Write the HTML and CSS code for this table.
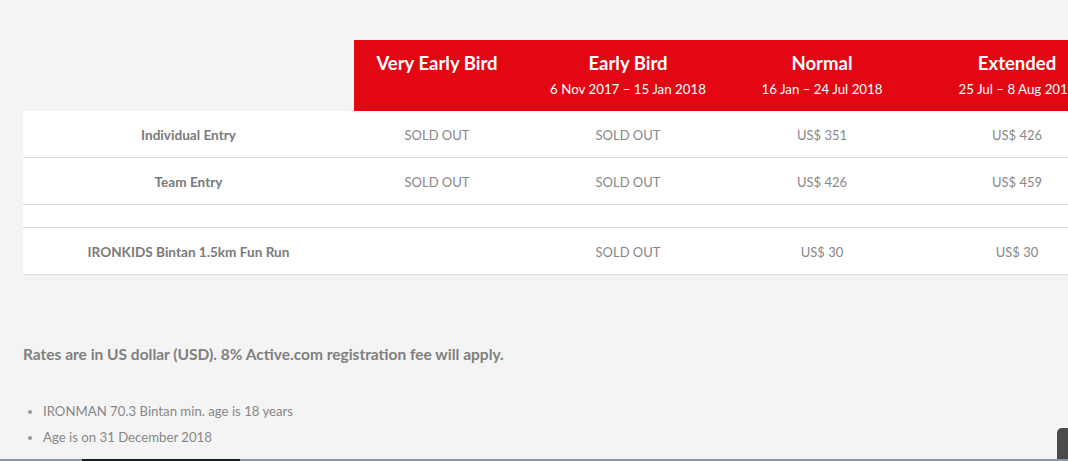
FILE: index.html
```html
<!DOCTYPE html>
<html>
<head>
<meta charset="utf-8">
<link rel="stylesheet" href="styles.css">
</head>
<body>
<div class="page">
  <table class="rates">
    <colgroup>
      <col class="c-label"><col class="c1"><col class="c2"><col class="c3"><col class="c4">
    </colgroup>
    <thead>
      <tr>
        <th class="blank"></th>
        <th><div class="title">Very Early Bird</div><div class="date">&nbsp;</div></th>
        <th><div class="title">Early Bird</div><div class="date">6 Nov 2017 – 15 Jan 2018</div></th>
        <th><div class="title">Normal</div><div class="date">16 Jan – 24 Jul 2018</div></th>
        <th><div class="title">Extended</div><div class="date">25 Jul – 8 Aug 2018</div></th>
      </tr>
    </thead>
    <tbody>
      <tr>
        <td class="label">Individual Entry</td>
        <td>SOLD OUT</td><td>SOLD OUT</td><td>US$ 351</td><td>US$ 426</td>
      </tr>
      <tr>
        <td class="label">Team Entry</td>
        <td>SOLD OUT</td><td>SOLD OUT</td><td>US$ 426</td><td>US$ 459</td>
      </tr>
      <tr class="spacer">
        <td></td><td></td><td></td><td></td><td></td>
      </tr>
      <tr>
        <td class="label">IRONKIDS Bintan 1.5km Fun Run</td>
        <td></td><td>SOLD OUT</td><td>US$ 30</td><td>US$ 30</td>
      </tr>
    </tbody>
  </table>

  <p class="note">Rates are in US dollar (USD). 8% Active.com registration fee will apply.</p>

  <ul class="bullets">
    <li>IRONMAN 70.3 Bintan min. age is 18 years</li>
    <li>Age is on 31 December 2018</li>
  </ul>
</div>
<div class="chat-tab"></div>
<div class="bottom-bar"><span class="bar-seg"></span></div>
</body>
</html>
```
FILE: styles.css
```css
html, body {
  margin: 0;
  padding: 0;
  background: #f4f4f4;
  overflow: hidden;
  height: 461px;
}
body {
  font-family: Lato, "Open Sans", sans-serif;
  color: #7b7b7b;
  position: relative;
}
.page {
  padding: 40px 0 0 23px;
  width: 1200px;
}
.rates {
  border-collapse: collapse;
  table-layout: fixed;
  width: 1103px;
}
.c-label { width: 331px; }
.c1 { width: 166px; }
.c2 { width: 216px; }
.c3 { width: 172px; }
.c4 { width: 218px; }

.rates th {
  background: #e30613;
  color: #fff;
  height: 71px;
  padding: 0;
  vertical-align: top;
  text-align: center;
}
.rates th.blank { background: transparent; }
.title {
  font-size: 18.5px;
  font-weight: 700;
  margin-top: 12px;
  line-height: 22px;
}
.date {
  font-size: 13.3px;
  font-weight: 400;
  line-height: 16px;
  margin-top: 7px;
}
.rates td {
  background: #fff;
  height: 44px;
  padding: 2px 0 0 0;
  text-align: center;
  font-size: 13px;
  color: #878787;
  border-bottom: 1px solid #dcdcdc;
}
.rates td.label {
  font-weight: 700;
  font-size: 13.6px;
  color: #7a7a7a;
}
.rates tr.spacer td { height: 20px; }

.note {
  margin: 70px 0 0 0;
  font-size: 15.5px;
  font-weight: 700;
  color: #808080;
}
.bullets {
  margin: 35px 0 0 0;
  padding: 0 0 0 20px;
  font-size: 13.2px;
  color: #878787;
}
.bullets li {
  line-height: 26px;
}
.bullets li::marker { color: #999; }

.chat-tab {
  position: absolute;
  left: 1057px;
  top: 428px;
  width: 20px;
  height: 40px;
  background: #4a4a4a;
  border-radius: 5px 0 0 0;
}
.bottom-bar {
  position: absolute;
  left: 0;
  right: 0;
  top: 459px;
  height: 2px;
  background: #8996a6;
}
.bar-seg {
  position: absolute;
  left: 82px;
  width: 158px;
  top: 0;
  height: 2px;
  background: #1a1d22;
}
```
